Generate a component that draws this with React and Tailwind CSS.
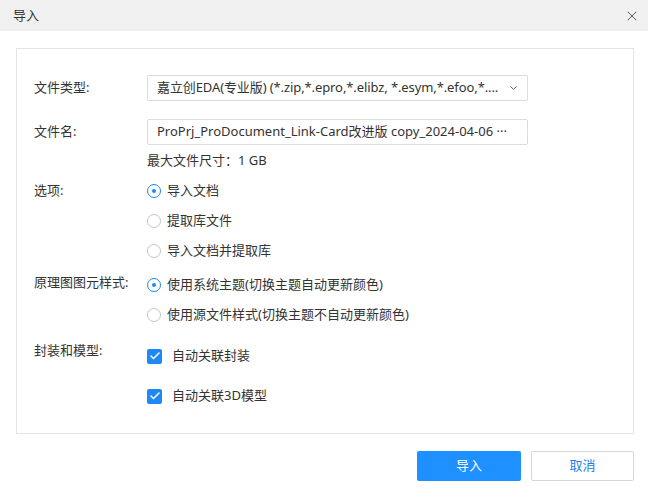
import { X, ChevronDown, Check } from "lucide-react";

const font = { fontFamily: '"Noto Sans", "Noto Sans CJK SC", sans-serif' };

const Radio = ({ checked, label }) => (
  <div className="flex h-[30px] items-center gap-[6px]">
    <span
      className={`flex h-[14px] w-[14px] items-center justify-center rounded-full border bg-white ${
        checked ? "border-[#1e88f5]" : "border-[#c4c4c4]"
      }`}
    >
      {checked && <span className="h-[4px] w-[4px] rounded-full bg-[#1e88f5]" />}
    </span>
    <span>{label}</span>
  </div>
);

const CheckBox = ({ label }) => (
  <div className="flex h-[40px] items-center gap-[10px]">
    <span className="flex h-[15px] w-[15px] items-center justify-center rounded-[2px] bg-[#1e88f5]">
      <Check className="h-[12px] w-[12px] text-white" strokeWidth={3} />
    </span>
    <span>{label}</span>
  </div>
);

export default function App() {
  return (
    <div className="h-[500px] w-[648px] bg-white text-[13px] text-[#333]" style={font}>
      {/* Header */}
      <div className="flex h-[31px] items-center justify-between bg-[#f0f0f0] pl-[13px] pr-[8px]">
        <span className="text-[13px] text-[#333]">导入</span>
        <X className="h-[16px] w-[16px] text-[#444]" strokeWidth={1.3} />
      </div>

      {/* Body */}
      <div className="ml-[16px] mr-[14px] mt-[17px] h-[386px] border border-[#e4e4e4] pl-[17px] pr-[105px] pt-[26px]">
        <div className="grid grid-cols-[113px_minmax(0,1fr)]">
          <div className="flex h-[26px] items-center">文件类型:</div>
          <div className="flex h-[26px] items-center rounded-[2px] border border-[#dcdcdc] pl-[9px] pr-[8px]">
            <span className="overflow-hidden whitespace-nowrap tracking-[-0.1px]">
              嘉立创EDA(专业版) (*.zip,*.epro,*.elibz, *.esym,*.efoo,*....
            </span>
            <ChevronDown className="ml-auto h-[12px] w-[12px] shrink-0 pl-[1px] text-[#555]" />
          </div>

          <div className="mt-[18px] flex h-[26px] items-center">文件名:</div>
          <div className="mt-[18px] flex h-[26px] items-center rounded-[2px] border border-[#dcdcdc] pl-[9px] pr-[6px]">
            <span className="overflow-hidden whitespace-nowrap">ProPrj_ProDocument_Link-Card改进版 copy_2024-04-06 ···</span>
          </div>

          <div />
          <div className="flex h-[31px] items-center">最大文件尺寸：1 GB</div>

          <div className="flex h-[30px] items-start pt-[5px]">选项:</div>
          <div>
            <Radio checked label="导入文档" />
            <Radio label="提取库文件" />
            <Radio label="导入文档并提取库" />
          </div>

          <div className="flex h-[30px] items-center pt-[4px]">原理图图元样式:</div>
          <div className="pt-[4px]">
            <Radio checked label="使用系统主题(切换主题自动更新颜色)" />
            <Radio label="使用源文件样式(切换主题不自动更新颜色)" />
          </div>

          <div className="pt-[11px]">封装和模型:</div>
          <div className="pt-[6px]">
            <CheckBox label="自动关联封装" />
            <CheckBox label="自动关联3D模型" />
          </div>
        </div>
      </div>

      {/* Footer */}
      <div className="mr-[14px] mt-[17px] flex justify-end gap-[10px]">
        <button className="h-[30px] w-[104px] rounded-[2px] bg-[#1e90ff] text-[13px] text-white">导入</button>
        <button className="h-[30px] w-[103px] rounded-[2px] border border-[#d6d6d6] bg-white text-[13px] text-[#1e80e8]">
          取消
        </button>
      </div>
    </div>
  );
}
